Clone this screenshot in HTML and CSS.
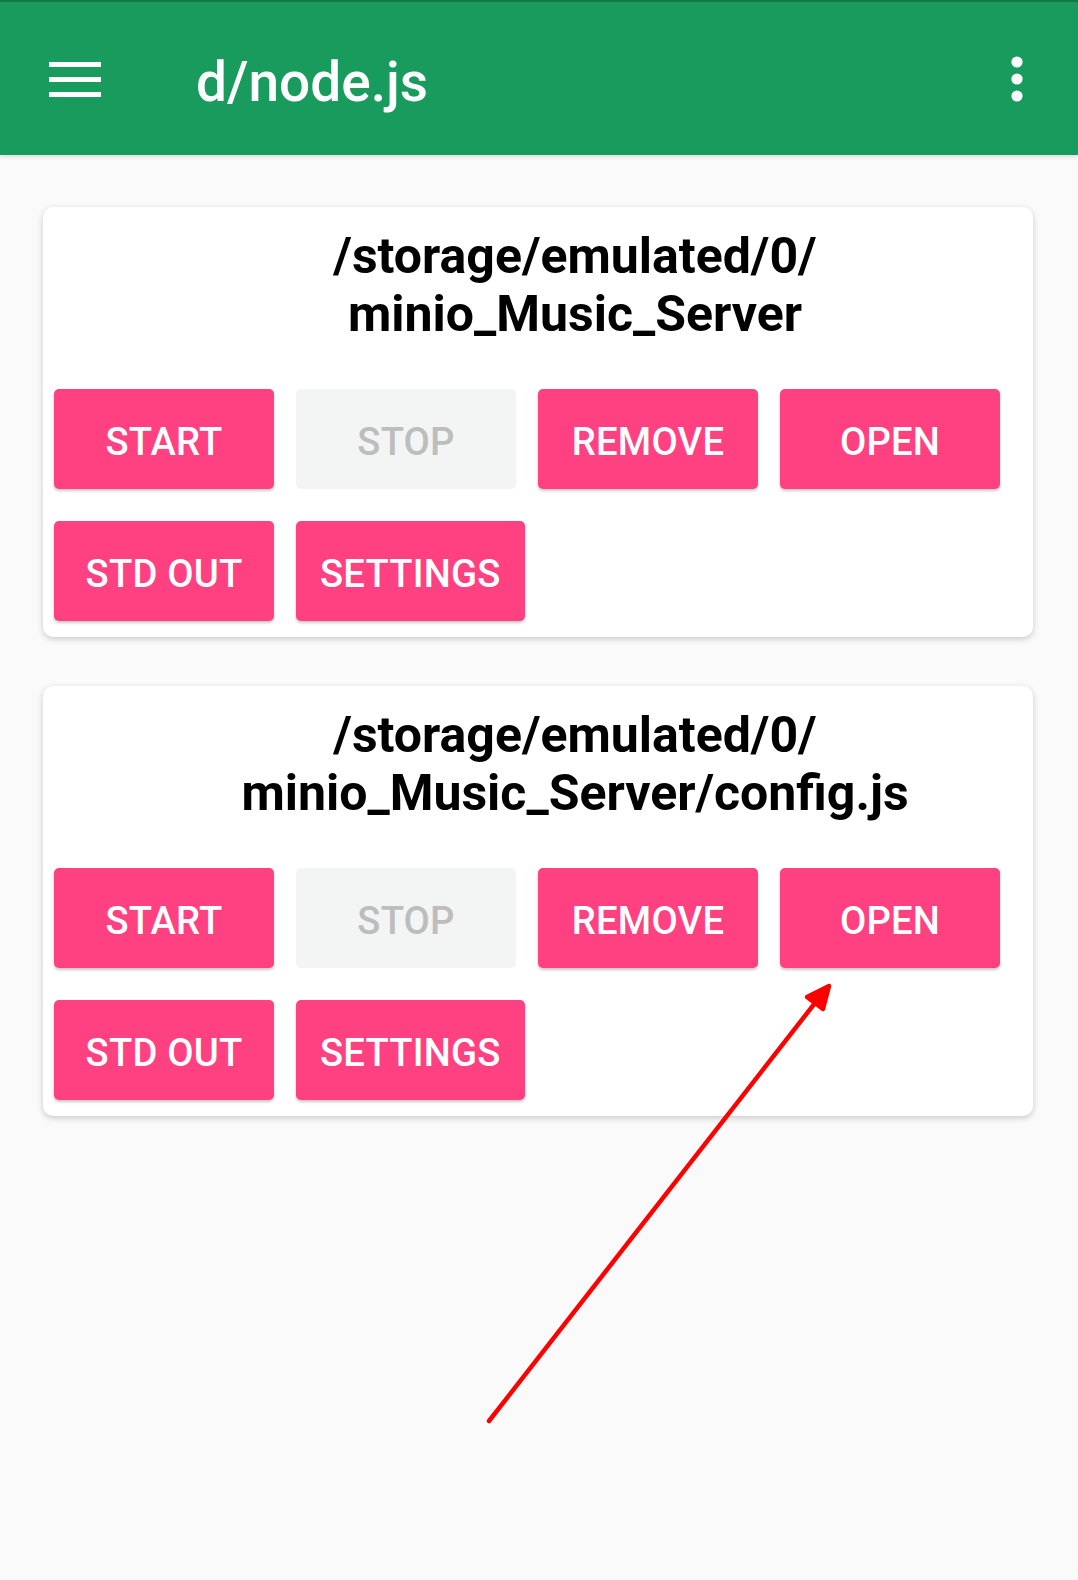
FILE: index.html
```html
<!DOCTYPE html>
<html>
<head>
<meta charset="utf-8">
<link rel="stylesheet" href="styles.css">
</head>
<body>
<header class="toolbar">
  <svg class="menu-icon" width="52" height="35" viewBox="0 0 52 35">
    <rect x="0" y="0" width="52" height="5" fill="#fff"/>
    <rect x="0" y="15" width="52" height="5" fill="#fff"/>
    <rect x="0" y="30" width="52" height="5" fill="#fff"/>
  </svg>
  <div class="toolbar-title">d/node.js</div>
  <svg class="more-icon" width="14" height="46" viewBox="0 0 14 46">
    <circle cx="7" cy="6" r="5.6" fill="#fff"/>
    <circle cx="7" cy="23" r="5.6" fill="#fff"/>
    <circle cx="7" cy="40" r="5.6" fill="#fff"/>
  </svg>
</header>
<main class="content">
  <section class="card">
    <div class="card-title"><span>/storage/emulated/0/</span><span>minio_Music_Server</span></div>
    <div class="btn-row">
      <div class="btn">START</div>
      <div class="btn disabled">STOP</div>
      <div class="btn">REMOVE</div>
      <div class="btn">OPEN</div>
      <div class="btn">STD OUT</div>
      <div class="btn">SETTINGS</div>
    </div>
  </section>
  <section class="card">
    <div class="card-title"><span>/storage/emulated/0/</span><span>minio_Music_Server/config.js</span></div>
    <div class="btn-row">
      <div class="btn">START</div>
      <div class="btn disabled">STOP</div>
      <div class="btn">REMOVE</div>
      <div class="btn">OPEN</div>
      <div class="btn">STD OUT</div>
      <div class="btn">SETTINGS</div>
    </div>
  </section>
</main>
<svg class="annotation" width="1078" height="1580" viewBox="0 0 1078 1580">
  <line x1="489" y1="1421" x2="822" y2="994" stroke="#ff0000" stroke-width="4.5" stroke-linecap="round"/>
  <polygon points="829,986 807,997 823,1009" fill="#ff0000" stroke="#ff0000" stroke-width="4.5" stroke-linejoin="round"/>
</svg>
</body>
</html>
```
FILE: styles.css
```css
html, body {
  margin: 0;
  padding: 0;
}
body {
  background: #fafafa;
  font-family: Roboto, "Liberation Sans", sans-serif;
  width: 1078px;
  min-height: 1580px;
  position: relative;
  overflow: hidden;
}
.toolbar {
  height: 153px;
  border-top: 2px solid #127a49;
  background: #199b5e;
  display: flex;
  align-items: center;
  box-shadow: 0 2px 4px rgba(0,0,0,0.12);
}
.menu-icon {
  margin-left: 49px;
  margin-top: 1px;
  flex: none;
}
.toolbar-title {
  margin-left: 95px;
  margin-top: 6px;
  color: #fff;
  font-size: 55px;
  font-weight: 500;
  flex: 1;
}
.more-icon {
  margin-right: 54px;
  flex: none;
}
.content {
  padding: 52px 45px 0 43px;
  display: flex;
  flex-direction: column;
  gap: 49px;
}
.card {
  background: #fff;
  border-radius: 10px;
  box-shadow: 0 2px 6px rgba(0,0,0,0.2);
  height: 430px;
  box-sizing: border-box;
  padding: 20px 0 0 11px;
}
.card-title {
  padding-left: 63px;
  display: flex;
  flex-direction: column;
  align-items: center;
  font-size: 50px;
  font-weight: 700;
  line-height: 58px;
  color: #000;
}
.btn-row {
  margin-top: 46px;
  display: flex;
  flex-wrap: wrap;
  column-gap: 22px;
  row-gap: 32px;
  width: 946px;
}
.btn {
  min-width: 220px;
  height: 100px;
  box-sizing: border-box;
  padding: 5px 24px 0;
  background: #ff4081;
  color: #fff;
  border-radius: 5px;
  box-shadow: 0 2px 3px rgba(0,0,0,0.22);
  display: flex;
  align-items: center;
  justify-content: center;
  font-size: 38.2px;
  font-weight: 500;
  letter-spacing: 0.2px;
}
.btn.disabled {
  background: #f3f4f4;
  color: #bdbdbd;
  box-shadow: none;
}
.annotation {
  position: absolute;
  left: 0;
  top: 0;
  pointer-events: none;
}
```
